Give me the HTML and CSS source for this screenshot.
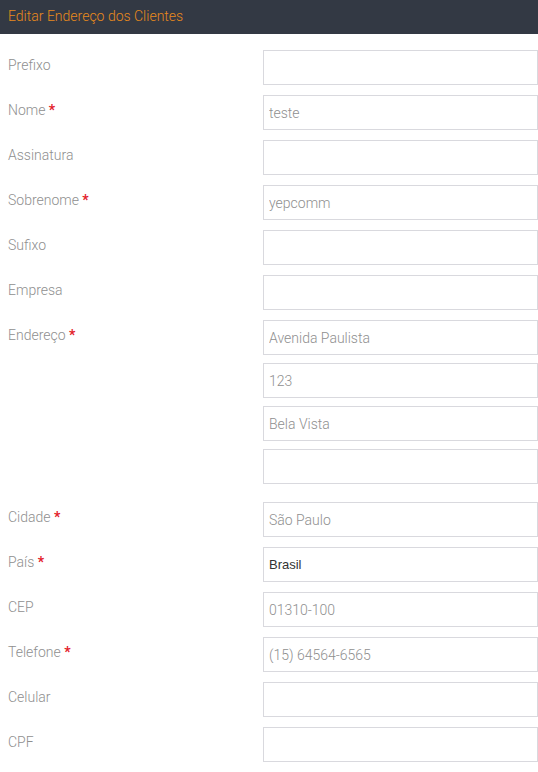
FILE: index.html
```html
<!DOCTYPE html>
<html lang="pt-BR">
<head>
<meta charset="utf-8">
<title>Editar Endereço dos Clientes</title>
<link rel="stylesheet" href="styles.css">
</head>
<body>
<header class="topbar">Editar Endereço dos Clientes</header>
<form class="form">
  <div class="row"><label class="lbl">Prefixo</label><div class="ctl"><input class="inp" type="text" value=""></div></div>
  <div class="row"><label class="lbl">Nome <span class="req">*</span></label><div class="ctl"><input class="inp" type="text" value="teste"></div></div>
  <div class="row"><label class="lbl">Assinatura</label><div class="ctl"><input class="inp" type="text" value=""></div></div>
  <div class="row"><label class="lbl">Sobrenome <span class="req">*</span></label><div class="ctl"><input class="inp" type="text" value="yepcomm"></div></div>
  <div class="row"><label class="lbl">Sufixo</label><div class="ctl"><input class="inp" type="text" value=""></div></div>
  <div class="row"><label class="lbl">Empresa</label><div class="ctl"><input class="inp" type="text" value=""></div></div>
  <div class="row"><label class="lbl">Endereço <span class="req">*</span></label>
    <div class="ctl multi">
      <input class="inp" type="text" value="Avenida Paulista">
      <input class="inp" type="text" value="123">
      <input class="inp" type="text" value="Bela Vista">
      <input class="inp" type="text" value="">
    </div>
  </div>
  <div class="row"><label class="lbl">Cidade <span class="req">*</span></label><div class="ctl"><input class="inp" type="text" value="São Paulo"></div></div>
  <div class="row"><label class="lbl">País <span class="req">*</span></label><div class="ctl"><select class="sel"><option>Brasil</option></select></div></div>
  <div class="row"><label class="lbl">CEP</label><div class="ctl"><input class="inp" type="text" value="01310-100"></div></div>
  <div class="row"><label class="lbl">Telefone <span class="req">*</span></label><div class="ctl"><input class="inp" type="text" value="(15) 64564-6565"></div></div>
  <div class="row"><label class="lbl">Celular</label><div class="ctl"><input class="inp" type="text" value=""></div></div>
  <div class="row"><label class="lbl">CPF</label><div class="ctl"><input class="inp" type="text" value=""></div></div>
</form>
</body>
</html>
```
FILE: styles.css
```css
* { box-sizing: border-box; }
html, body { margin: 0; padding: 0; background: #fff; }
body { font-family: Roboto, "Liberation Sans", sans-serif; font-size: 14px; font-weight: 300; }

.topbar {
  height: 34px;
  background: #333944;
  color: #e8891c;
  padding: 6px 8px 0;
  line-height: 20px;
  font-size: 14px;
  font-weight: 300;
}

.form {
  display: flex;
  flex-direction: column;
  gap: 10px;
  padding-top: 16px;
}

.row {
  display: grid;
  grid-template-columns: 263px 275px;
}

.lbl {
  padding: 5px 0 0 8px;
  line-height: 20px;
  color: #8f8f8f;
  font-size: 14px;
  font-weight: 300;
}

.req { color: #e3202a; font-weight: 700; }

.ctl { display: flex; flex-direction: column; }
.multi { gap: 8px; padding-bottom: 8px; }

.inp, .sel {
  width: 275px;
  height: 35px;
  margin: 0;
  border: 1px solid #d9d9de;
  border-radius: 0;
  background: #fff;
  padding: 0 5px;
  outline: none;
}

.inp {
  font-family: Roboto, "Liberation Sans", sans-serif;
  font-size: 14px;
  font-weight: 300;
  color: #8f8f8f;
}

.sel {
  -webkit-appearance: none;
  appearance: none;
  font-family: "Liberation Sans", Arial, sans-serif;
  font-size: 13px;
  color: #333;
}
```
